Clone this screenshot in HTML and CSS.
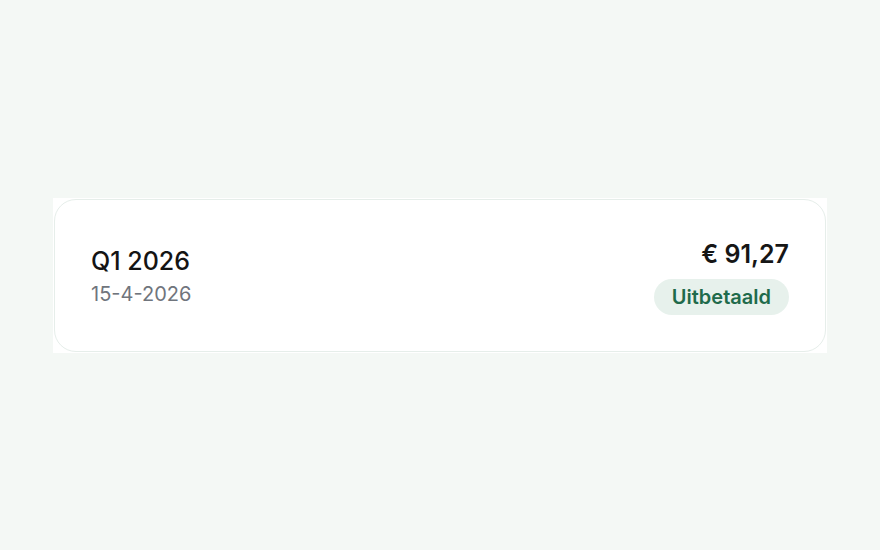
FILE: index.html
```html
<!DOCTYPE html>
<html lang="nl">
<head>
<meta charset="utf-8">
<link rel="stylesheet" href="styles.css">
</head>
<body>
<main class="page">
  <div class="wrap">
    <div class="card">
      <div class="left">
        <div class="title">Q1 2026</div>
        <div class="date">15-4-2026</div>
      </div>
      <div class="right">
        <div class="amount">€ 91,27</div>
        <span class="badge">Uitbetaald</span>
      </div>
    </div>
  </div>
</main>
</body>
</html>
```
FILE: styles.css
```css
html, body {
  margin: 0;
  padding: 0;
}
body {
  background: #f4f8f5;
  font-family: Inter, "Noto Sans", sans-serif;
}
.page {
  width: 880px;
  height: 550px;
  display: flex;
  align-items: center;
  justify-content: center;
}
.wrap {
  width: 774px;
  height: 155px;
  background: #ffffff;
  display: flex;
}
.card {
  flex: 1;
  margin: 1px;
  border: 1px solid #e6eeea;
  border-radius: 22px;
  display: flex;
  align-items: center;
  justify-content: space-between;
  padding: 3px 36px 0;
}
.left {
  display: flex;
  flex-direction: column;
  gap: 5px;
}
.title {
  font-size: 25px;
  font-weight: 500;
  color: #141414;
  line-height: 30px;
}
.date {
  font-size: 20px;
  color: #70757d;
  line-height: 26px;
}
.right {
  display: flex;
  flex-direction: column;
  align-items: flex-end;
  gap: 10px;
}
.amount {
  font-size: 25px;
  font-weight: 600;
  color: #161616;
  line-height: 30px;
}
.badge {
  display: inline-flex;
  align-items: center;
  height: 36px;
  padding: 0 18px;
  border-radius: 18px;
  background: #e7f1ec;
  color: #1f6b4b;
  font-size: 20px;
  font-weight: 600;
}
```
